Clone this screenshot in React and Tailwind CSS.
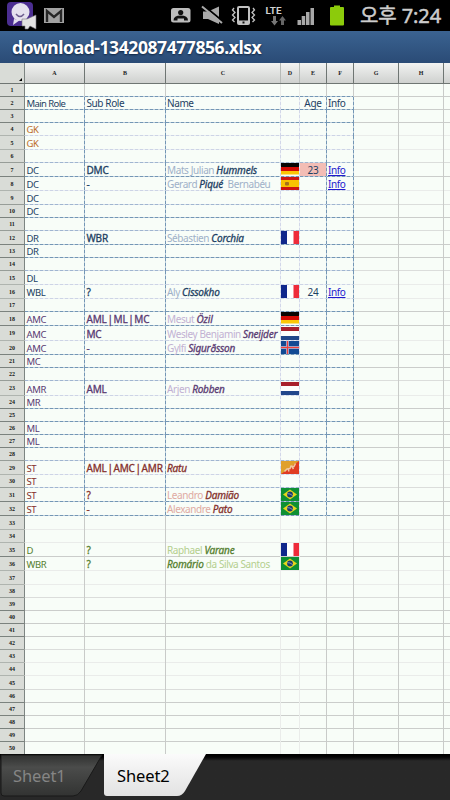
import React from "react";

const HEIGHTS = [13, 13, 13, 13, 14, 13, 14, 14, 14, 13, 13, 14, 13, 13, 14, 14, 13, 14, 15, 14, 13, 13, 15, 13, 13, 13, 13, 13, 14, 13, 14, 14, 14, 13, 14, 14, 14, 13, 13, 13, 13, 13, 13, 13, 14, 13, 13, 13, 13, 13];
// Weight of the rule under each row: 2 strong, 1 medium, 0 faint
const RULES = "22200120121221002202210222210122" + "002001222100122222";

const COLS = ["w-[60px]", "w-[81px]", "w-[115px]", "w-[19px]", "w-[27px]", "w-[27px]", "w-[45px]", "w-[45px]", "w-[7px]"];
const LETTERS = ["A", "B", "C", "D", "E", "F", "G", "H", ""];

const NAVY = "text-[#1d3f63]";
const NAVY_L = "text-[#9fb1c8]";
const PURPLE = "text-[#593a72]";
const PURPLE_L = "text-[#c2b1d3]";
const RED = "text-[#84302c]";
const RED_L = "text-[#dfaaa2]";
const GREEN = "text-[#557f2f]";
const GREEN_L = "text-[#b4cf8e]";

const DATA = {
  2: { a: "Main Role", b: "Sub Role", plain: true, name: [["Name", "d"]], age: "Age", info: "Info", c: NAVY },
  4: { a: "GK", c: "text-[#bd6c28]" },
  5: { a: "GK", c: "text-[#bd6c28]" },
  7: { a: "DC", b: "DMC", name: [["Mats Julian ", "l"], ["Hummels", "b"]], flag: "de", age: "23", hot: true, info: "Info", link: true, c: NAVY, l: NAVY_L },
  8: { a: "DC", b: "-", name: [["Gerard ", "l"], ["Piqué", "b"], ["  Bernabéu", "l"]], flag: "es", info: "Info", link: true, c: NAVY, l: NAVY_L },
  9: { a: "DC", c: NAVY },
  10: { a: "DC", c: NAVY },
  12: { a: "DR", b: "WBR", name: [["Sébastien ", "l"], ["Corchia", "b"]], flag: "fr", c: NAVY, l: NAVY_L },
  13: { a: "DR", c: NAVY },
  15: { a: "DL", c: NAVY },
  16: { a: "WBL", b: "?", name: [["Aly ", "l"], ["Cissokho", "b"]], flag: "fr", age: "24", info: "Info", link: true, c: NAVY, l: NAVY_L },
  18: { a: "AMC", b: "AML | ML | MC", name: [["Mesut ", "l"], ["Özil", "b"]], flag: "de", c: PURPLE, l: PURPLE_L },
  19: { a: "AMC", b: "MC", name: [["Wesley Benjamin ", "l"], ["Sneijder", "b"]], flag: "nl", c: PURPLE, l: PURPLE_L },
  20: { a: "AMC", b: "-", name: [["Gylfi ", "l"], ["Sigurðsson", "b"]], flag: "is", c: PURPLE, l: PURPLE_L },
  21: { a: "MC", c: PURPLE },
  23: { a: "AMR", b: "AML", name: [["Arjen ", "l"], ["Robben", "b"]], flag: "nl", c: PURPLE, l: PURPLE_L },
  24: { a: "MR", c: PURPLE },
  26: { a: "ML", c: PURPLE },
  27: { a: "ML", c: PURPLE },
  29: { a: "ST", b: "AML | AMC | AMR", name: [["Ratu", "b"]], flag: "bt", c: RED, l: RED_L },
  30: { a: "ST", c: RED },
  31: { a: "ST", b: "?", name: [["Leandro ", "l"], ["Damião", "b"]], flag: "br", c: RED, l: RED_L },
  32: { a: "ST", b: "-", name: [["Alexandre ", "l"], ["Pato", "b"]], flag: "br", c: RED, l: RED_L },
  35: { a: "D", b: "?", name: [["Raphael ", "l"], ["Varane", "b"]], flag: "fr", c: GREEN, l: GREEN_L },
  36: { a: "WBR", b: "?", name: [["Romário", "b"], [" da Silva Santos", "l"]], flag: "br", c: GREEN, l: GREEN_L },
};

function Flag({ code }) {
  const stripes = (colors) => colors.map(([c, y, h]) => <rect key={y} x="0" y={y} width="18" height={h} fill={c} />);
  return (
    <svg width="18" height="13" viewBox="0 0 18 13" className="block shrink-0">
      {code === "de" && stripes([["#080402", 0, 4], ["#d40a05", 4, 4], ["#fbc506", 8, 3.5]])}
      {code === "es" && (
        <>
          {stripes([["#cc1510", 0, 3], ["#f8c300", 3, 7], ["#cc1510", 10, 3]])}
          <rect x="4" y="5" width="4" height="3.5" rx="1" fill="#a6711c" />
        </>
      )}
      {code === "fr" && (
        <>
          <rect width="6" height="13" fill="#10278c" />
          <rect x="6" width="6.5" height="13" fill="#fff" />
          <rect x="12.5" width="5.5" height="13" fill="#ee2b3b" />
        </>
      )}
      {code === "nl" && stripes([["#a91e2c", 0, 4], ["#fdfdfd", 4, 5], ["#21468b", 9, 4]])}
      {code === "is" && (
        <>
          <rect width="18" height="13" fill="#134a94" />
          <rect x="5" width="3" height="13" fill="#a79fc0" />
          <rect y="5" width="18" height="3" fill="#a79fc0" />
          <rect x="6" width="1" height="13" fill="#ee3f3c" />
          <rect y="6" width="18" height="1" fill="#ee3f3c" />
        </>
      )}
      {code === "bt" && (
        <>
          <rect width="18" height="13" fill="#e0a02b" />
          <path d="M0 13L18 0V13Z" fill="#e03c22" />
          <path d="M3.5 10.5L6 8L9 7.5L10 5L13 5.5L14.5 2.5M7 7.5L8 10.5M11 5.5L12.5 8" fill="none" stroke="#efc9a0" strokeWidth="1.5" />
        </>
      )}
      {code === "br" && (
        <>
          <rect width="18" height="13" fill="#0d8f34" />
          <path d="M2 6.5L9 1.5L16 6.5L9 11.5Z" fill="#e6d51c" />
          <circle cx="9" cy="6.5" r="2.9" fill="#1b3a6f" />
          <path d="M6.3 5.7Q9 5.3 11.6 7.6" fill="none" stroke="#a9bccb" strokeWidth=".7" />
        </>
      )}
    </svg>
  );
}

const H_SOLID = { 2: "bg-[#cbcdcb]", 1: "bg-[#dbdddb]", 0: "bg-[#eaecea]" };
const H_DASH = {
  2: "bg-[repeating-linear-gradient(90deg,#7396b5_0_3px,#b9cad9_3px_5px)]",
  1: "bg-[repeating-linear-gradient(90deg,#a0b5d0_0_3px,#d2dce8_3px_5px)]",
  0: "bg-[repeating-linear-gradient(90deg,#cdd4e6_0_3px,#e8ecf3_3px_5px)]",
};
const H_HEAD = { 2: "bg-[#7b827e]", 1: "bg-[#979d98]", 0: "bg-[#afb4af]" };
const V_DASH = "bg-[repeating-linear-gradient(180deg,#7396b5_0_3px,#b9cad9_3px_5px)]";
const V_DASH_FAINT = "bg-[repeating-linear-gradient(180deg,#d2d7e9_0_3px,#eaeef5_3px_5px)]";

function vertical(n, i) {
  if (n >= 2 && n <= 32 && i < 6) return i === 2 || i === 3 ? V_DASH_FAINT : V_DASH;
  return i === 2 || i === 3 ? "bg-[#eaecea]" : "bg-[#c9cbc9]";
}

const STROKE = "[-webkit-text-stroke:0.3px_currentColor]";

function CellContent({ i, d }) {
  if (!d) return null;
  if (i === 0) return <span className={`relative top-px pl-[1.5px] text-[9.5px] ${d.plain ? "tracking-[-0.6px]" : "tracking-[-0.35px]"} ${d.c}`}>{d.a}</span>;
  if (i === 1) return <span className={`relative top-px pl-[1.5px] text-[10px] ${d.plain ? "tracking-[-0.4px]" : `tracking-[-0.2px] [word-spacing:-1.6px] ${STROKE}`} ${d.c}`}>{d.b}</span>;
  if (i === 2)
    return (
      <span className="relative top-px pl-[1px] text-[10px] tracking-[-0.4px]">
        {d.name?.map(([t, k]) => (
          <span key={t} className={k === "l" ? d.l : k === "b" ? `italic tracking-[-0.2px] ${STROKE} ${d.c}` : d.c}>{t}</span>
        ))}
      </span>
    );
  if (i === 3) return d.flag ? <Flag code={d.flag} /> : null;
  if (i === 4)
    return d.age ? (
      <span className={`flex h-full w-full items-end justify-center tracking-[-0.3px] ${d.hot ? "bg-[#f3bdb5]" : ""} ${NAVY}`}>
        <span className="relative top-px">{d.age}</span>
      </span>
    ) : null;
  if (i === 5) return <span className={`relative top-px pl-[1px] tracking-[-0.4px] ${d.link ? "text-[#2119cf] underline" : NAVY}`}>{d.info}</span>;
  return null;
}

function Row({ n, h }) {
  const d = DATA[n];
  const r = RULES[n - 1];
  const dashed = n <= 32;
  return (
    <div className="flex shrink-0" style={{ height: h }}>
      <div className="flex w-[25px] shrink-0 flex-col bg-[#d9dcd7]">
        <div className="flex min-h-0 flex-1 items-center justify-center border-r border-[#7d8582] font-['Liberation_Serif',serif] text-[6px] leading-none font-bold text-[#161816]">{n}</div>
        <div className={`h-px ${H_HEAD[r]}`} />
      </div>
      {COLS.map((w, i) => (
        <div key={i} className={`flex shrink-0 ${w}`}>
          <div className="flex min-w-0 flex-1 flex-col">
            <div className="flex min-h-0 flex-1 items-end text-[10px] leading-[13px] whitespace-pre">
              <CellContent i={i} d={d} />
            </div>
            <div className={`h-px ${dashed && i < 6 ? H_DASH[r] : H_SOLID[r]}`} />
          </div>
          {i < 8 && <div className={`w-px shrink-0 ${vertical(n, i)}`} />}
        </div>
      ))}
    </div>
  );
}

function StatusBar() {
  return (
    <div className="flex h-[31px] shrink-0 items-center bg-black">
      <svg width="350" height="31" viewBox="0 0 350 31" className="block shrink-0">
        <rect x="7" y="2" width="26" height="24" rx="4" fill="#4b2e91" />
        <circle cx="20.500" cy="12" r="9" fill="#e4e1ee" />
        <path d="M14 19L13 25L20 20Z" fill="#e4e1ee" />
        <path d="M16 14Q20 19 24 14" fill="none" stroke="#6b5c8e" strokeWidth="1.5" />
        <path d="M22 19H27L36 15V29L30 26L28 29H25V26H22Z" fill="#e3e3e3" stroke="#77747c" strokeWidth=".6" />
        <rect x="44" y="8" width="20" height="15" fill="#a2a2a2" />
        <path d="M47 22V11L54 17L61 11V22" fill="none" stroke="#272727" strokeWidth="2.400" />
        <rect x="171" y="8" width="19.500" height="14.500" rx="2.500" fill="#bdbdbd" />
        <circle cx="180.700" cy="12.500" r="2.600" fill="#111" />
        <path d="M173.500 20.500Q173.500 15.500 180.700 15.500Q188 15.500 188 20.500H184V18.500H177.500V20.500Z" fill="#111" />
        <path d="M203 11.500H208L219 6.500V24L208 19H203Z" fill="#aaa" />
        <path d="M203 5L223 21.500" stroke="#000" strokeWidth="2" />
        <path d="M202 6.500L222 23" stroke="#aaa" strokeWidth="2" />
        <rect x="238" y="7" width="11" height="17" rx="1" fill="none" stroke="#c2c2c2" strokeWidth="2" />
        <path d="M238 20.500H249V24H238Z" fill="#c2c2c2" />
        <rect x="242.500" y="21.500" width="2" height="2" fill="#111" />
        <path d="M234 8L232.500 10L235 12.500L232.500 15L235 17.500L232.500 20L234.500 22M253 8L254.500 10L252 12.500L254.500 15L252 17.500L254.500 20L252.500 22" fill="none" stroke="#c2c2c2" strokeWidth="1.300" />
        <text x="265.500" y="14" fontFamily="Roboto, sans-serif" fontSize="9.500" fontWeight="700" textLength="16" lengthAdjust="spacingAndGlyphs" fill="#d0d0d0">LTE</text>
        <path d="M273 16H276V21H278L274.500 25.500L271 21H273Z" fill="#777" />
        <path d="M281 25V20.500H279L282.500 16L286 20.500H284V25Z" fill="#666" />
        <path d="M297.500 20H301V25H297.500ZM301.700 16H305.200V25H301.700ZM306 12H309.500V25H306ZM310.500 8H314V25H310.500Z" fill="#a8a8a8" />
        <path d="M331 7H334V5.500H340V7H343Q344 7 344 8V24.500Q344 25.500 343 25.500H331Q330 25.500 330 24.500V8Q330 7 331 7Z" fill="#8ccb0b" />
      </svg>
      <span className="ml-[10px] font-['Noto_Sans','Noto_Sans_CJK_KR',sans-serif] text-[20px] leading-[31px] tracking-[-0.1px] whitespace-nowrap text-[#cdcdcd] [-webkit-text-stroke:0.5px_#cdcdcd]">오후 7:24</span>
    </div>
  );
}

function Tab({ label, active }) {
  return (
    <div className={`relative h-[46px] w-[104px] shrink-0 ${active ? "text-black" : "text-[#858585]"}`}>
      <svg width="104" height="46" viewBox="0 0 104 46" className="absolute inset-0 block">
        <defs>
          <linearGradient id={active ? "tab-on" : "tab-off"} x2="0" y2="1">
            <stop offset="0" stopColor={active ? "#fbfbfb" : "#303130"} />
            <stop offset=".3" stopColor={active ? "#f3f3f3" : "#4b4c4b"} />
            <stop offset="1" stopColor={active ? "#e2e2e2" : "#323332"} />
          </linearGradient>
        </defs>
        <path
          d={active ? "M0 0H102L81 37Q78 42 73 42H3Q0 42 0 39Z" : "M1 1H102L81 37Q78 42 73 42H4Q1 42 1 39Z"}
          fill={active ? "url(#tab-on)" : "url(#tab-off)"}
          stroke={active ? "none" : "#191919"}
        />
      </svg>
      <span className="relative block pl-[13px] text-[16.5px] leading-[44px] tracking-[-0.1px]">{label}</span>
    </div>
  );
}

export default function App() {
  return (
    <div className="flex h-[800px] w-[450px] flex-col overflow-hidden bg-[#f8fdf8] font-['Noto_Sans',sans-serif]">
      <StatusBar />
      <div className="flex h-[32px] shrink-0 items-center bg-linear-to-b from-[#3b6391] to-[#2a4b76] pl-3 text-[17.5px] leading-[32px] font-bold tracking-[-0.42px] text-white">
        <span className="[text-shadow:0_1px_2px_#0f2340]">download-1342087477856.xlsx</span>
      </div>
      <div className="flex h-[21px] shrink-0 border-b border-[#6f7673] bg-linear-to-b from-[#f2f3f2] to-[#cfd1cf] font-['Liberation_Serif',serif] text-[6px] font-bold text-[#1c1c1c]">
        <div className="flex w-[25px] shrink-0 items-end justify-end border-r border-[#7d8582] bg-[#d9dcd7] pr-[2px] pb-[2px]">
          <div className="size-[3px] bg-black [clip-path:polygon(100%_0,100%_100%,0_100%)]" />
        </div>
        {COLS.map((w, i) => (
          <div key={i} className={`flex shrink-0 items-center justify-center ${w} ${i === 8 ? "" : "border-r"} ${i === 2 || i === 3 ? "border-[#b6bab7]" : "border-[#6f7673]"}`}>{LETTERS[i]}</div>
        ))}
      </div>
      <div className="flex h-[670px] shrink-0 flex-col overflow-hidden">
        {HEIGHTS.map((h, i) => (
          <Row key={i} n={i + 1} h={h} />
        ))}
      </div>
      <div className="flex h-[46px] shrink-0 bg-linear-to-b from-black via-[#282828] via-15% to-[#282828]">
        <Tab label="Sheet1" />
        <Tab label="Sheet2" active />
      </div>
    </div>
  );
}
